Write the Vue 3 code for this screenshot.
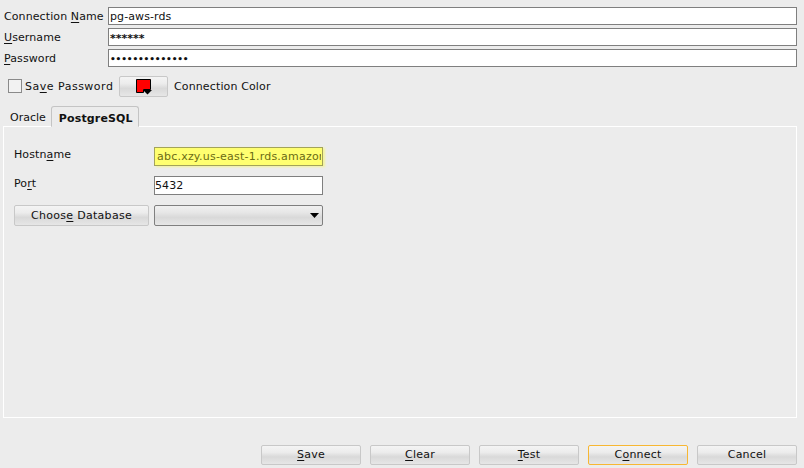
<template>
  <div class="dialog">
    <div class="fields">
      <label class="lbl">Connection <u>N</u>ame</label>
      <div class="input">pg-aws-rds</div>
      <label class="lbl"><u>U</u>sername</label>
      <div class="input mask">******</div>
      <label class="lbl"><u>P</u>assword</label>
      <div class="input dots">••••••••••••••</div>
    </div>

    <div class="options">
      <span class="check"></span>
      <span class="save">Sa<u>v</u>e Password</span>
      <button class="btn color">
        <svg width="18" height="17" viewBox="0 0 18 17">
          <path d="M1.5 1.5H15.5V11.5H8.5V14.5H1.5Z" fill="#ff0000" stroke="#000" stroke-width="1" />
          <path d="M8 12H17L12.5 16.5Z" fill="#000" />
        </svg>
      </button>
      <span class="colorlbl">Connection Color</span>
    </div>

    <div class="tabs">
      <span class="tab">Oracle</span>
      <span class="tab active">PostgreSQL</span>
    </div>

    <div class="panel">
      <div class="prow host">
        <label class="plbl hostlbl">Host<span>n</span><u>a</u>me</label>
        <div class="pinput yellow"><span class="clip">abc.xzy.us-east-1.rds.amazonaws.com</span></div>
      </div>
      <div class="prow port">
        <label class="plbl portlbl">Po<u>r</u>t</label>
        <div class="pinput">5432</div>
      </div>
      <div class="prow db">
        <button class="btn choose">Choos<u>e</u> Database</button>
        <div class="select">
          <svg width="9" height="5" viewBox="0 0 9 5"><path d="M0 0H9L4.5 5Z" fill="#000" /></svg>
        </div>
      </div>
    </div>

    <div class="actions">
      <button class="btn act"><u>S</u>ave</button>
      <button class="btn act"><u>C</u>lear</button>
      <button class="btn act"><u>T</u>est</button>
      <button class="btn act primary">C<u>o</u>nnect</button>
      <button class="btn act">Cancel</button>
    </div>
  </div>
</template>

<script setup>
</script>

<style>
html, body { margin: 0; background: #ececec; }
</style>

<style scoped>
.dialog {
  width: 804px;
  height: 468px;
  box-sizing: border-box;
  padding: 7px 7px 0 4px;
  background: #ececec;
  color: #111;
  font-family: "DejaVu Sans", sans-serif;
  font-size: 11px;
  display: flex;
  flex-direction: column;
  overflow: hidden;
}
u { text-underline-offset: 2px; }
.fields {
  display: grid;
  grid-template-columns: 104px 1fr;
  row-gap: 3px;
}
.lbl { line-height: 20px; height: 18px; letter-spacing: 0.1px; }
.input {
  height: 18px;
  box-sizing: border-box;
  border: 1px solid #7f7f7f;
  background: #fff;
  padding-left: 1px;
  line-height: 18px;
  letter-spacing: 0.1px;
  color: #111;
}
.mask { font-weight: 700; letter-spacing: 0; line-height: 19px; }
.dots { font-size: 9px; letter-spacing: -0.15px; font-weight: 700; line-height: 18px; }
.options {
  display: flex;
  align-items: center;
  margin-top: 8px;
  height: 22px;
  padding-left: 4px;
}
.check {
  width: 12px;
  height: 12px;
  border: 1px solid #8a8a8a;
  background: #f2f2f2;
}
.save { margin-left: 3px; width: 94px; letter-spacing: 0.5px; }
.btn {
  box-sizing: border-box;
  border: 1px solid #c8c8c8;
  border-radius: 2px;
  background: linear-gradient(#f4f4f4 0%, #ececec 35%, #d9d9d9 60%, #e6e6e6 100%);
  font: inherit;
  color: #111;
  padding: 0;
}
.color {
  width: 49px;
  height: 21px;
  margin-top: 1px;
  display: flex;
  align-items: center;
  justify-content: center;
}
.colorlbl { margin-left: 6px; letter-spacing: 0.13px; }
.tabs {
  display: flex;
  margin-top: 9px;
  height: 21px;
  padding-left: 2px;
  align-items: flex-end;
  position: relative;
  z-index: 1;
  margin-bottom: -1px;
}
.tab {
  padding: 0 4px;
  height: 19px;
  line-height: 20px;
  box-sizing: border-box;
}
.tab.active {
  margin-left: 1px;
  height: 21px;
  padding: 2px 6px 0 7px;
  width: 88px;
  font-weight: 700;
  letter-spacing: 0.15px;
  border: 1px solid #c4c4c4;
  border-bottom: 1px solid #ececec;
  border-radius: 3px 3px 0 0;
  background: #ececec;
}
.panel {
  width: 794px;
  height: 292px;
  margin-left: -1px;
  box-sizing: border-box;
  border: 1px solid #fff;
  padding: 0 0 0 10px;
}
.prow { display: flex; }
.host { margin-top: 20px; }
.port { margin-top: 10px; }
.db { margin-top: 10px; }
.plbl { width: 140px; line-height: 14px; letter-spacing: 0.1px; }
.hostlbl { margin-top: 1px; }
.portlbl { margin-top: 1px; }
.pinput {
  width: 169px;
  height: 19px;
  box-sizing: border-box;
  border: 1px solid #7f7f7f;
  background: #fff;
  line-height: 17px;
  padding-left: 0;
  letter-spacing: 0.1px;
}
.yellow {
  background: #ffff70;
  border-color: #a3a35a;
  padding-left: 2px;
  color: #6b6b14;
  box-shadow: 2px 1px 2px #f4f49a;
}
.clip { display: block; width: 164px; overflow: hidden; white-space: nowrap; letter-spacing: 0.22px; }
.choose { width: 135px; height: 21px; letter-spacing: 0.3px; }
.select {
  margin-left: 5px;
  width: 169px;
  height: 21px;
  box-sizing: border-box;
  border: 1px solid #7f7f7f;
  border-radius: 2px;
  background: linear-gradient(#f0f0f0 0%, #e6e6e6 35%, #d9d9d9 60%, #e6e6e6 100%);
  display: flex;
  align-items: center;
  justify-content: flex-end;
  padding-right: 3px;
}
.actions {
  display: flex;
  justify-content: flex-end;
  gap: 9px;
  margin-top: 27px;
}
.act { width: 100px; height: 20px; letter-spacing: 0.2px; padding-bottom: 1px; }
.primary { border-color: #f7b733; }
</style>
